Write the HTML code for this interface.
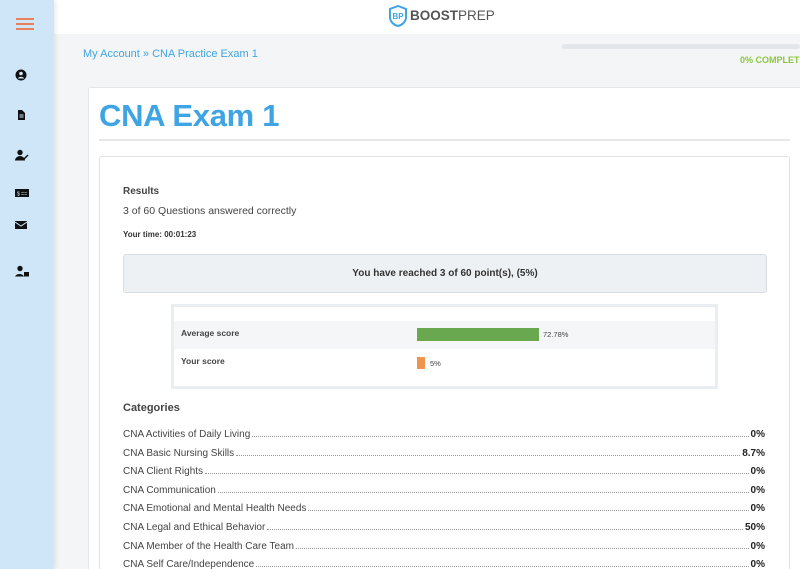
<!DOCTYPE html>
<html><head><style>
*{margin:0;padding:0;box-sizing:border-box}
html,body{width:800px;height:569px;overflow:hidden}
body{background:#f4f5f6;font-family:"Liberation Sans",sans-serif;position:relative}
.side{position:absolute;left:0;top:0;width:54px;height:569px;background:#cfe6f8;box-shadow:2px 0 4px rgba(0,0,0,.08);z-index:2}
.hdr{position:absolute;left:54px;top:0;right:0;height:34px;background:#fff}
.ic{position:absolute;left:15px;width:12px;height:12px}
.crumb{position:absolute;left:83px;top:48px;font-size:11px;color:#3ea4e3}
.prog{position:absolute;left:562px;top:44px;width:238px;height:5px;background:#e3e7ec;border-radius:3px}
.comp{position:absolute;left:740px;top:55px;font-size:9px;font-weight:bold;color:#8cc63f;white-space:nowrap}
.card{position:absolute;left:88px;top:87px;width:712px;height:482px;background:#fff;border:1px solid #e4e6e8;border-right:none;border-bottom:none;border-radius:3px 0 0 0}
h1{position:absolute;left:99px;top:98px;font-size:31px;color:#3ea4e3;font-weight:bold;letter-spacing:-.3px}
.rule{position:absolute;left:99px;top:139px;width:691px;height:2px;background:#e6e8ea}
.inner{position:absolute;left:99px;top:156px;width:691px;height:413px;background:#fff;border:1px solid #e0e3e6;border-bottom:none;border-radius:3px 3px 0 0}
.t{position:absolute;color:#444;white-space:nowrap}
.reach{position:absolute;left:123px;top:254px;width:644px;height:39px;background:#eef1f4;border:1px solid #d7dde3;border-radius:3px;text-align:center;line-height:37px;font-size:10px;font-weight:bold;color:#333}
.chart{position:absolute;left:171px;top:304px;width:547px;height:85px;border:3px solid #e9eef2;background:#fff}
.row{position:absolute;left:123px;width:642px;height:14px;font-size:10px;color:#444;display:flex;align-items:flex-end}
.row .d{flex:1;border-bottom:1px dotted #999;margin:0 2px 3px}
.row b{color:#222}
</style></head><body>
<div class="side">
 <div style="position:absolute;left:16px;top:18px;width:18px;height:1.5px;background:#e9805a;box-shadow:0 5px 0 #e9805a,0 10px 0 #e9805a"></div>
 <svg class="ic" style="top:69px" viewBox="0 0 12 12"><circle cx="6" cy="6" r="5.5" fill="#111"/><circle cx="6" cy="4.5" r="1.8" fill="#cfe6f8"/><path d="M2.8 9.5a3.5 3 0 0 1 6.4 0" fill="#cfe6f8"/></svg>
 <svg class="ic" style="top:109px" viewBox="0 0 12 12"><path d="M3 1h4l3 3v7H3z" fill="#111"/><path d="M4.5 6h4M4.5 8h4" stroke="#cfe6f8"/></svg>
 <svg class="ic" style="top:149px;width:14px" viewBox="0 0 14 12"><circle cx="5" cy="3.5" r="2.7" fill="#111"/><path d="M0 11.5a5 4.5 0 0 1 10 0z" fill="#111"/><path d="M9 10l4-4" stroke="#111" stroke-width="1.5"/></svg>
 <svg class="ic" style="top:187px;width:14px" viewBox="0 0 14 12"><rect x="0" y="2" width="14" height="8" fill="#111"/><text x="2" y="8.5" font-size="5" fill="#cfe6f8">$ ==</text></svg>
 <svg class="ic" style="top:219px" viewBox="0 0 12 12"><rect x="0" y="2" width="12" height="8" fill="#111"/><path d="M0 3l6 4 6-4" stroke="#cfe6f8" fill="none"/></svg>
 <svg class="ic" style="top:265px;width:14px" viewBox="0 0 14 12"><circle cx="5" cy="3.5" r="2.7" fill="#111"/><path d="M0 11.5a5 4.5 0 0 1 9 0z" fill="#111"/><rect x="9" y="7" width="5" height="4.5" fill="#111"/></svg>
</div>
<div class="hdr">
 <svg style="position:absolute;left:334px;top:5px" width="20" height="22" viewBox="0 0 20 22"><path d="M10 1L18 4v8c0 5-4 8-8 9-4-1-8-4-8-9V4z" fill="none" stroke="#3ea4e3" stroke-width="2"/><text x="4.5" y="14" font-size="8" font-weight="bold" fill="#3ea4e3">BP</text></svg>
 <div style="position:absolute;left:356px;top:8px;font-size:13.5px;color:#555"><b>BOOST</b>PREP</div>
</div>
<div class="crumb">My Account » CNA Practice Exam 1</div>
<div class="prog"></div>
<div class="comp">0% COMPLETE</div>
<div class="card"></div>
<h1>CNA Exam 1</h1>
<div class="rule"></div>
<div class="inner"></div>
<div class="t" style="left:123px;top:186px;font-size:10px;font-weight:bold">Results</div>
<div class="t" style="left:123px;top:205px;font-size:10.5px">3 of 60 Questions answered correctly</div>
<div class="t" style="left:123px;top:230px;font-size:8px;font-weight:bold;color:#333">Your time: 00:01:23</div>
<div class="reach">You have reached 3 of 60 point(s), (5%)</div>
<div class="chart">
 <div style="position:absolute;left:0;top:14px;width:541px;height:28px;background:#f5f6f7"></div>
 <div class="t" style="left:7px;top:21px;font-size:8.5px;font-weight:bold">Average score</div>
 <div style="position:absolute;left:243px;top:21px;width:122px;height:13px;background:#6aa84f"></div>
 <div class="t" style="left:369px;top:23px;font-size:7.5px">72.78%</div>
 <div class="t" style="left:7px;top:49px;font-size:8.5px;font-weight:bold">Your score</div>
 <div style="position:absolute;left:243px;top:50px;width:8px;height:12px;background:#f0944d"></div>
 <div class="t" style="left:256px;top:52px;font-size:7.5px">5%</div>
</div>
<div class="t" style="left:123px;top:402px;font-size:11px;font-weight:bold">Categories</div>
<div class="row" style="top:426px"><span>CNA Activities of Daily Living</span><span class="d"></span><b>0%</b></div>
<div class="row" style="top:445px"><span>CNA Basic Nursing Skills</span><span class="d"></span><b>8.7%</b></div>
<div class="row" style="top:463px"><span>CNA Client Rights</span><span class="d"></span><b>0%</b></div>
<div class="row" style="top:482px"><span>CNA Communication</span><span class="d"></span><b>0%</b></div>
<div class="row" style="top:500px"><span>CNA Emotional and Mental Health Needs</span><span class="d"></span><b>0%</b></div>
<div class="row" style="top:519px"><span>CNA Legal and Ethical Behavior</span><span class="d"></span><b>50%</b></div>
<div class="row" style="top:538px"><span>CNA Member of the Health Care Team</span><span class="d"></span><b>0%</b></div>
<div class="row" style="top:556px"><span>CNA Self Care/Independence</span><span class="d"></span><b>0%</b></div>
</body></html>
